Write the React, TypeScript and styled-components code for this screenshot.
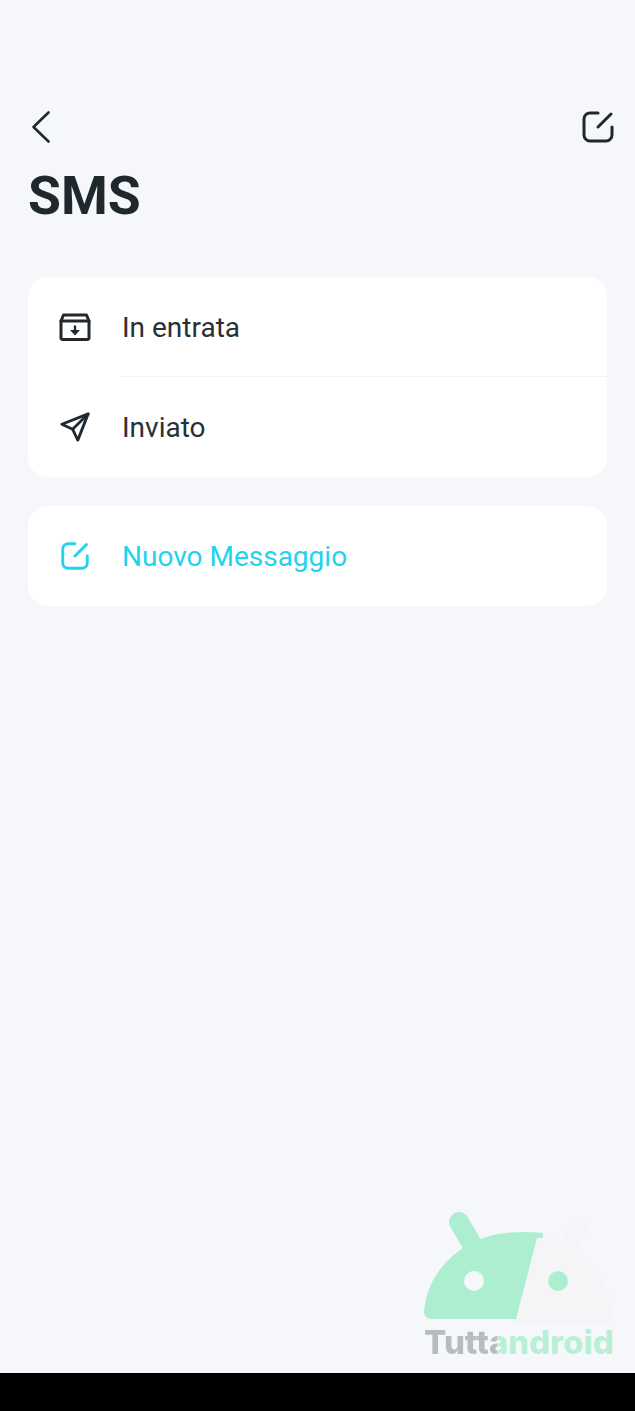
import React from 'react';
import styled, { createGlobalStyle } from 'styled-components';

const GlobalStyle = createGlobalStyle`
	html, body {
		margin: 0;
		padding: 0;
		background: #000;
	}
`;

const Page = styled.div`
	position: relative;
	inline-size: 635px;
	block-size: 1411px;
	display: flex;
	flex-direction: column;
	overflow: hidden;
	font-family: Roboto, 'Liberation Sans', sans-serif;
`;

const Screen = styled.main`
	flex: 1;
	background: #f5f7fb;
	padding: 109px 28px 0;
	display: flex;
	flex-direction: column;
`;

const NavBar = styled.div`
	display: flex;
	justify-content: space-between;
	align-items: center;
	block-size: 36px;
	margin-inline-end: -7px;
`;

const Title = styled.h1`
	margin: 21px 0 51px;
	font-size: 53.5px;
	line-height: 60px;
	font-weight: 700;
	color: #1f282d;
`;

const Card = styled.section`
	background: #fff;
	border-radius: 20px;
	margin-block-end: 29px;
`;

const Row = styled.div<{ $accent?: boolean }>`
	display: flex;
	align-items: center;
	block-size: 100px;
	color: ${({ $accent }) => ($accent ? '#22d3ee' : '#2a3136')};
`;

const IconSlot = styled.div<{ $inset?: number }>`
	inline-size: 94px;
	padding-inline-start: ${({ $inset }) => $inset ?? 31}px;
	box-sizing: border-box;
	display: flex;
	align-items: center;
`;

const Label = styled.span`
	font-size: 28px;
	font-weight: 400;
`;

const Divider = styled.div`
	block-size: 1px;
	margin-block-start: -1px;
	margin-inline-start: 94px;
	background: #f1f3f5;
`;

const BottomBar = styled.div`
	block-size: 38px;
	background: #000;
`;

const Watermark = styled.div`
	position: absolute;
	left: 424px;
	top: 1211px;
	inline-size: 190px;
	display: flex;
	flex-direction: column;
`;

const Wordmark = styled.div`
	margin-top: -1px;
	font-family: Inter, Roboto, sans-serif;
	font-size: 33px;
	line-height: 36px;
	font-weight: 800;
	white-space: nowrap;
	background: linear-gradient(90deg, #b9bcbf 73px, #b7f0d4 73px);
	-webkit-background-clip: text;
	background-clip: text;
	color: transparent;
`;

const BackIcon = () => (
	<svg width="24" height="36" viewBox="0 0 24 36" fill="none" stroke="#1f282d" strokeWidth="2.6" strokeLinecap="round" strokeLinejoin="round">
		<path d="M20.5 3.5 L5.5 18 L20.5 32.5" />
	</svg>
);

const EditIcon = ({ size, color, width }: { size: number; color: string; width: number }) => (
	<svg width={size} height={size} viewBox="0 0 32 32" fill="none" stroke={color} strokeWidth={width} strokeLinecap="round" strokeLinejoin="round">
		<path d="M16 2 H8 a6 6 0 0 0 -6 6 V24 a6 6 0 0 0 6 6 H24 a6 6 0 0 0 6 -6 V16" />
		<path d="M16 16 L29 3" />
	</svg>
);

const InboxIcon = () => (
	<svg width="32" height="28" viewBox="0 0 32 28" fill="none" stroke="#22292e" strokeWidth="3" strokeLinejoin="round" strokeLinecap="round">
		<path d="M2 8 L4.5 2 H27.5 L30 8 V25 a1.5 1.5 0 0 1 -1.5 1.5 H3.5 A1.5 1.5 0 0 1 2 25 Z" />
		<path d="M2 8 H30" />
		<path d="M16 12.5 V18" strokeWidth="2.4" strokeLinecap="butt" />
		<path d="M11 17 H21 L16 22.5 Z" fill="#22292e" stroke="none" />
	</svg>
);

const SendIcon = () => (
	<svg width="30" height="30" viewBox="0 0 32 32" fill="none" stroke="#22292e" strokeWidth="3" strokeLinejoin="round" strokeLinecap="round">
		<path d="M2 13 L30 2 L19 30 L13.5 18.5 Z" />
		<path d="M13.5 18.5 L30 2" />
	</svg>
);

const Logo = () => (
	<svg width="190" height="114" viewBox="0 0 190 114">
		<path d="M113 27 L88 112 H180 C186 112 188 109 188 104 C186 75 170 50 147 35 C135 28 125 27 113 27 Z" fill="#f4f5f7" />
		<path d="M156 15 L140 42" stroke="#f4f5f7" strokeWidth="18" strokeLinecap="round" />
		<path d="M35 11 L55 45" stroke="#aeeed0" strokeWidth="20" strokeLinecap="round" />
		<path d="M0 100 C3 70 20 48 45 33 C65 22 95 19 119 22 L119 27 L113 27 L92 108 H8 C3 108 0 105 0 100 Z" fill="#aeeed0" />
		<circle cx="50" cy="70" r="10" fill="#f5f7fb" />
		<circle cx="134" cy="70" r="10" fill="#aeeed0" />
	</svg>
);

const App: React.FC = () => {
	return (
		<Page>
			<GlobalStyle />
			<Screen>
				<NavBar>
					<BackIcon />
					<EditIcon size={32} color="#1f282d" width={3} />
				</NavBar>
				<Title>SMS</Title>
				<Card>
					<Row>
						<IconSlot><InboxIcon /></IconSlot>
						<Label>In entrata</Label>
					</Row>
					<Divider />
					<Row>
						<IconSlot $inset={32}><SendIcon /></IconSlot>
						<Label>Inviato</Label>
					</Row>
				</Card>
				<Card>
					<Row $accent>
						<IconSlot $inset={33}><EditIcon size={28} color="#22d3ee" width={3.3} /></IconSlot>
						<Label>Nuovo Messaggio</Label>
					</Row>
				</Card>
			</Screen>
			<BottomBar />
			<Watermark>
				<Logo />
				<Wordmark>Tuttandroid</Wordmark>
			</Watermark>
		</Page>
	);
};

export default App;
